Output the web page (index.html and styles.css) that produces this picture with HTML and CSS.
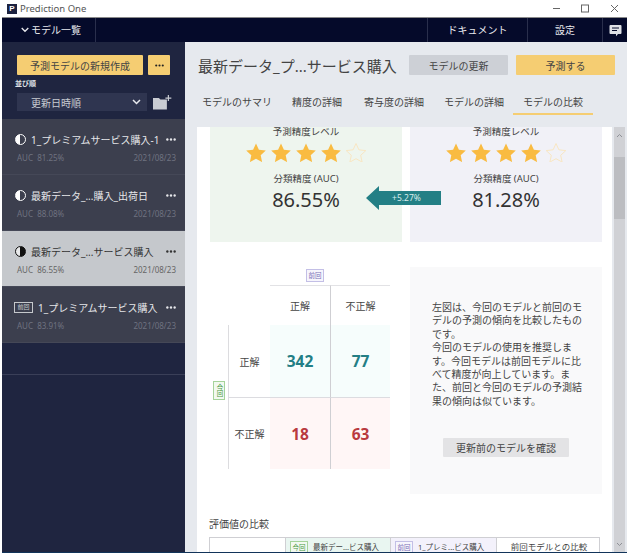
FILE: index.html
```html
<!DOCTYPE html>
<html lang="ja">
<head>
	<meta charset="utf-8">
	<title>Prediction One</title>
	<link rel="stylesheet" href="styles.css">
</head>
<body>
	<svg class="defs" width="0" height="0">
		<symbol id="star" viewBox="0 0 20 19"><path d="M10 .5l2.900 6.300 6.900.8-5.100 4.700 1.400 6.800L10 15.700l-6.100 3.400 1.400-6.800L.2 7.600l6.900-.8z"/></symbol>
		<symbol id="dots" viewBox="0 0 11 3"><circle cx="1.500" cy="1.500" r="1.300"/><circle cx="5.500" cy="1.500" r="1.300"/><circle cx="9.500" cy="1.500" r="1.300"/></symbol>
	</svg>

	<div class="window">
		<div class="titlebar">
			<span class="app-logo">P</span>
			<span class="app-name">Prediction One</span>
			<div class="win-btns">
				<svg width="9" height="9" viewBox="0 0 9 9"><path d="M1 4.500h7" stroke="#666" fill="none"/></svg>
				<svg width="9" height="9" viewBox="0 0 9 9"><rect x=".5" y="1" width="7" height="7" stroke="#666" fill="none"/></svg>
				<svg width="9" height="9" viewBox="0 0 9 9"><path d="M1 1l7 7M8 1L1 8" stroke="#666" fill="none"/></svg>
			</div>
		</div>

		<div class="nav">
			<div class="nav-models">
				<svg width="8" height="6" viewBox="0 0 8 6"><path d="M.7 1l3.300 3.300L7.300 1" stroke="#e8e9ee" stroke-width="1.300" fill="none"/></svg>
				モデル一覧
			</div>
			<div class="nav-space"></div>
			<div class="nav-item nav-doc">ドキュメント</div>
			<div class="nav-item nav-set">設定</div>
			<div class="nav-item nav-chat">
				<svg width="13" height="13" viewBox="0 0 13 13"><path d="M1.500 1h10a1 1 0 0 1 1 1v7a1 1 0 0 1-1 1H9l-2 2.200V10H1.500a1 1 0 0 1-1-1V2a1 1 0 0 1 1-1z" fill="#dfe1e6"/><path d="M3 4h7M3 6.500h5" stroke="#050a2a"/></svg>
			</div>
		</div>

		<div class="app">
			<aside class="sidebar">
				<div class="side-top">
					<div class="new-row">
						<button class="btn-new">予測モデルの新規作成</button>
						<button class="btn-more"><svg class="dots" width="9" height="3"><use href="#dots"/></svg></button>
					</div>
					<div class="sort-label">並び順</div>
					<div class="sort-row">
						<div class="sort-select">
							更新日時順
							<svg width="9" height="6" viewBox="0 0 9 6"><path d="M1 1l3.500 3.500L8 1" stroke="#e8e9ee" stroke-width="1.500" fill="none"/></svg>
						</div>
						<svg class="folder" width="20" height="15" viewBox="0 0 20 15"><path d="M1 3h6l1.500 1.500H15V14.500H1z" fill="#c9ccd2"/><path d="M16.500 0v6M13.500 3h6" stroke="#c9ccd2" stroke-width="1.200"/></svg>
					</div>
				</div>

				<div class="model-list">
					<div class="model">
						<div class="model-main">
							<span class="half"></span>
							<span class="model-name">1_プレミアムサービス購入-1</span>
							<svg class="dots" width="10" height="3"><use href="#dots"/></svg>
						</div>
						<div class="model-sub"><span>AUC&nbsp; 81.25%</span><span>2021/08/23</span></div>
					</div>
					<div class="model">
						<div class="model-main">
							<span class="half"></span>
							<span class="model-name">最新データ_...購入_出荷日</span>
							<svg class="dots" width="10" height="3"><use href="#dots"/></svg>
						</div>
						<div class="model-sub"><span>AUC&nbsp; 88.08%</span><span>2021/08/23</span></div>
					</div>
					<div class="model selected">
						<div class="model-main">
							<span class="half"></span>
							<span class="model-name">最新データ_...サービス購入</span>
							<svg class="dots" width="10" height="3"><use href="#dots"/></svg>
						</div>
						<div class="model-sub"><span>AUC&nbsp; 86.55%</span><span>2021/08/23</span></div>
					</div>
					<div class="model">
						<div class="model-main">
							<span class="prev-tag">前回</span>
							<span class="model-name">1_プレミアムサービス購入</span>
							<svg class="dots" width="10" height="3"><use href="#dots"/></svg>
						</div>
						<div class="model-sub"><span>AUC&nbsp; 83.91%</span><span>2021/08/23</span></div>
					</div>
				</div>
				<div class="side-rest"></div>
			</aside>

			<main class="main">
				<div class="main-head">
					<h1>最新データ_プ...サービス購入</h1>
					<button class="btn-update">モデルの更新</button>
					<button class="btn-predict">予測する</button>
				</div>
				<div class="tabs">
					<span class="tab">モデルのサマリ</span>
					<span class="tab">精度の詳細</span>
					<span class="tab">寄与度の詳細</span>
					<span class="tab">モデルの詳細</span>
					<span class="tab active">モデルの比較</span>
				</div>

				<div class="scroll-wrap">
					<div class="content">
						<div class="score-row">
							<div class="score now">
								<div class="score-label">予測精度レベル</div>
								<div class="stars">
									<svg><use href="#star"/></svg>
									<svg><use href="#star"/></svg>
									<svg><use href="#star"/></svg>
									<svg><use href="#star"/></svg>
									<svg class="star-off"><use href="#star"/></svg>
								</div>
								<div class="score-label auc">分類精度 (AUC)</div>
								<div class="score-num">86.55%</div>
							</div>
							<div class="score before">
								<div class="score-label">予測精度レベル</div>
								<div class="stars">
									<svg><use href="#star"/></svg>
									<svg><use href="#star"/></svg>
									<svg><use href="#star"/></svg>
									<svg><use href="#star"/></svg>
									<svg class="star-off"><use href="#star"/></svg>
								</div>
								<div class="score-label auc">分類精度 (AUC)</div>
								<div class="score-num">81.28%</div>
							</div>
							<div class="diff-arrow">
								<svg width="75" height="24" viewBox="0 0 75 24"><path d="M0 12L13 0v5h62v14H13v5z" fill="#237f85"/></svg>
								<span>+5.27%</span>
							</div>
						</div>

						<div class="compare-row">
							<div class="matrix-box">
								<div class="tag tag-prev matrix-prev">前回</div>
								<div class="tag tag-now matrix-now">今回</div>
								<div class="matrix">
									<div class="m-blank"></div>
									<div class="m-head m-top">正解</div>
									<div class="m-head m-top m-div">不正解</div>
									<div class="m-head m-left">正解</div>
									<div class="m-val good">342</div>
									<div class="m-val good m-div">77</div>
									<div class="m-head m-left m-low">不正解</div>
									<div class="m-val bad m-low">18</div>
									<div class="m-val bad m-low m-div">63</div>
								</div>
							</div>
							<div class="note">
								<p>左図は、今回のモデルと前回のモデルの予測の傾向を比較したものです。<br>今回のモデルの使用を推奨します。今回モデルは前回モデルに比べて精度が向上しています。また、前回と今回のモデルの予測結果の傾向は似ています。</p>
								<button class="btn-check">更新前のモデルを確認</button>
							</div>
						</div>

						<h2>評価値の比較</h2>
						<div class="eval-head">
							<div class="eval-cell"></div>
							<div class="eval-cell eval-now"><span class="tag tag-now">今回</span>最新デー...ビス購入</div>
							<div class="eval-cell eval-prev"><span class="tag tag-prev">前回</span>1_プレミ...ビス購入</div>
							<div class="eval-cell eval-diff">前回モデルとの比較</div>
						</div>
					</div>
					<div class="scrollbar">
						<span class="sb-arrow">
							<svg width="7" height="5" viewBox="0 0 7 5"><path d="M1 4l2.500-2.500L6 4" stroke="#8f9197" fill="none"/></svg>
						</span>
						<div class="sb-thumb"></div>
						<span class="sb-arrow sb-down">
							<svg width="7" height="5" viewBox="0 0 7 5"><path d="M1 1l2.500 2.500L6 1" stroke="#8f9197" fill="none"/></svg>
						</span>
					</div>
				</div>
			</main>
		</div>
	</div>
</body>
</html>
```

FILE: styles.css
```css
* {
	margin: 0;
	padding: 0;
	box-sizing: border-box;
}

html, body {
	height: 100%;
	background-color: #fff;
	overflow: hidden;
}

body {
	font-family: "Noto Sans", "Noto Sans CJK JP", sans-serif;
	color: #444;
}

button {
	font-family: inherit;
	border: 0;
	color: #444;
}

.defs {
	display: block;
}

.dots {
	flex: none;
	fill: currentColor;
}

.window {
	display: flex;
	flex-direction: column;
	width: 625px;
	height: 553px;
	margin-left: 2px;
	border-bottom: 1px solid #12345a;
}

/* タイトルバー */
.titlebar {
	display: flex;
	align-items: center;
	height: 18px;
	padding-left: 5px;
	border-bottom: 1px solid #8a8a8a;
	background-color: #fff;
}

.app-logo {
	width: 10px;
	height: 10px;
	background-color: #1d2340;
	color: #fff;
	font-size: 8px;
	line-height: 10px;
	text-align: center;
	font-family: "Liberation Sans", sans-serif;
	font-weight: bold;
}

.app-name {
	margin-left: 3px;
	font-size: 9.500px;
	color: #555;
}

.win-btns {
	display: flex;
	gap: 20px;
	margin-left: auto;
	padding-right: 8px;
}

/* ナビ */
.nav {
	display: flex;
	height: 24px;
	background-color: #050a2a;
	color: #e8e9ee;
	font-size: 10px;
	line-height: 24px;
}

.nav-models {
	display: flex;
	align-items: center;
	gap: 2px;
	width: 94px;
	padding-left: 19px;
	border-right: 1px solid #2a2f4c;
}

.nav-space {
	flex: 1;
}

.nav-item {
	display: flex;
	align-items: center;
	justify-content: center;
	border-left: 1px solid #2a2f4c;
}

.nav-doc { width: 100px; }
.nav-set { width: 75px; }
.nav-chat { width: 25px; }

.app {
	display: flex;
	flex: 1;
	min-height: 0;
}

/* サイドバー */
.sidebar {
	display: flex;
	flex-direction: column;
	width: 183px;
	background-color: #1f2540;
}

.side-top {
	height: 77px;
	padding: 13px 13px 0 15px;
}

.new-row {
	display: flex;
	gap: 5px;
}

.btn-new {
	width: 126px;
	height: 20px;
	background-color: #f5cd72;
	border-radius: 1px;
	font-size: 10px;
}

.btn-more {
	display: flex;
	align-items: center;
	justify-content: center;
	width: 22px;
	height: 20px;
	background-color: #f5cd72;
	border-radius: 1px;
	color: #222;
}

.sort-label {
	margin: 2px 0 0 -2px;
	height: 16px;
	font-size: 7px;
	line-height: 14px;
	color: #dfe1e6;
	font-weight: bold;
}

.sort-row {
	display: flex;
	align-items: center;
	gap: 5px;
}

.sort-select {
	display: flex;
	align-items: center;
	justify-content: space-between;
	width: 131px;
	height: 18px;
	padding: 0 6px 0 14px;
	background-color: #2f3550;
	font-size: 10px;
	color: #c9ccd2;
}

.model-list {
	display: flex;
	flex-direction: column;
}

.model {
	height: 56px;
	padding: 13px 9px 0 13px;
	background-color: #3c3f4e;
	border-bottom: 1px solid #454857;
	color: #e6e7ea;
}

.model.selected {
	background-color: #c5c8cc;
	color: #333;
}

.model-main {
	display: flex;
	align-items: center;
	height: 14px;
	font-size: 10px;
}

.half {
	flex: none;
	width: 11px;
	height: 11px;
	margin-right: 5px;
	border-radius: 50%;
	border: 1px solid #fff;
	background: linear-gradient(90deg, #fff 50%, #3c3f4e 50%);
}

.selected .half {
	border-color: #111;
	background: linear-gradient(90deg, #e8e9ea 50%, #111 50%);
}

.prev-tag {
	flex: none;
	width: 19px;
	height: 11px;
	margin: 0 5px 0 -1px;
	border: 1px solid #c5c8cc;
	font-size: 6px;
	line-height: 9px;
	text-align: center;
	color: #c5c8cc;
}

.model-name {
	flex: 1;
	white-space: nowrap;
}

.model-sub {
	display: flex;
	justify-content: space-between;
	margin-top: 6px;
	padding-left: 2px;
	font-size: 8px;
	color: #6f7280;
}

.selected .model-sub {
	color: #666;
}

.side-rest {
	height: 32px;
	border-bottom: 1px solid #3a3f58;
}

/* メイン */
.main {
	display: flex;
	flex: 1;
	flex-direction: column;
	min-width: 0;
	background-color: #e6e9ee;
}

.main-head {
	display: flex;
	align-items: center;
	height: 33px;
	padding: 13px 0 0 13px;
}

.main-head h1 {
	width: 211px;
	font-size: 15px;
	font-weight: normal;
	white-space: nowrap;
	color: #444;
}

.btn-update, .btn-predict {
	width: 99px;
	height: 20px;
	font-size: 10px;
	border-radius: 1px;
}

.btn-update {
	background-color: #cdd0d6;
}

.btn-predict {
	margin-left: 8px;
	background-color: #f5cd72;
}

.tabs {
	display: flex;
	align-items: flex-start;
	height: 52px;
	padding: 16px 0 0 7px;
	font-size: 10px;
}

.tab {
	height: 24px;
	padding: 3px 10px 0;
	white-space: nowrap;
}

.tab:nth-child(3) {
	margin-left: 2px;
}

.tab.active {
	margin-left: -1px;
	border-bottom: 2px solid #f5cd72;
}

.scroll-wrap {
	display: flex;
	flex: 1;
	min-height: 0;
	padding-left: 12px;
	gap: 2px;
}

.content {
	width: 415px;
	padding: 0 10px 0 12px;
	background-color: #fff;
	overflow: hidden;
}

.scrollbar {
	display: flex;
	flex-direction: column;
	width: 11px;
	background-color: #d0d1d5;
}

.sb-arrow {
	display: flex;
	align-items: center;
	justify-content: center;
	height: 16px;
}

.sb-thumb {
	height: 62px;
	margin-top: 14px;
	background-color: #bcbdc1;
}

.sb-down {
	margin-top: auto;
}

/* スコア */
.score-row {
	display: flex;
	gap: 8px;
	position: relative;
	padding-left: 1px;
}

.score {
	width: 192px;
	height: 115px;
	text-align: center;
	overflow: hidden;
}

.score.now { background-color: #eef5ee; }
.score.before { background-color: #f1f1f7; }

.score-label {
	margin-top: -2px;
	font-size: 9.500px;
	line-height: 14px;
}

.stars {
	display: flex;
	justify-content: center;
	gap: 5px;
	height: 19px;
	margin-top: 4px;
	fill: #f9bb41;
}

.stars svg {
	width: 20px;
	height: 19px;
}

.stars .star-off {
	fill: none;
	stroke: #f8e6c2;
	stroke-width: 1;
}

.score-label.auc {
	margin-top: 10px;
}

.score-num {
	font-size: 20px;
	line-height: 28px;
	color: #333;
}

.diff-arrow {
	position: absolute;
	left: 157px;
	top: 59px;
	width: 75px;
	height: 24px;
	color: #d8ecec;
	font-size: 8.500px;
	line-height: 24px;
	text-align: center;
}

.diff-arrow svg {
	position: absolute;
	left: 0;
	top: 0;
}

.diff-arrow span {
	position: relative;
	padding-left: 6px;
}

/* 混同行列 */
.compare-row {
	display: flex;
	margin-top: 25px;
	padding-left: 1px;
	gap: 8px;
}

.matrix-box {
	position: relative;
	width: 192px;
	height: 227px;
}

.tag {
	display: inline-block;
	border: 1px solid;
	font-size: 6.500px;
	text-align: center;
	line-height: 1;
	white-space: nowrap;
}

.tag-prev {
	border-color: #c3bfe6;
	color: #7a6fb8;
	background-color: #f6f5fc;
}

.tag-now {
	border-color: #a5d39a;
	color: #4a9a45;
	background-color: #f2f9f0;
}

.matrix-prev {
	position: absolute;
	left: 96px;
	top: 2px;
	width: 18px;
	height: 13px;
	line-height: 11px;
}

.matrix-now {
	position: absolute;
	left: 3px;
	top: 114px;
	width: 12px;
	height: 19px;
	writing-mode: vertical-rl;
	line-height: 10px;
}

.matrix {
	display: grid;
	grid-template-columns: 42px 60px 60px;
	grid-template-rows: 40px 72px 72px;
	margin: 18px 0 0 18px;
	font-size: 10px;
}

.m-blank {
	background-color: #fff;
}

.m-head {
	display: flex;
	align-items: center;
	justify-content: center;
}

.m-top {
	border-top: 1px solid #e2e2e5;
}

.m-left {
	border-left: 1px solid #dcdcdf;
}

.m-div {
	border-left: 1px solid #cfcfd3;
}

.m-low {
	border-top: 1px solid #dcdce0;
}

.m-val {
	display: flex;
	align-items: center;
	justify-content: center;
	font-size: 15.500px;
	font-weight: bold;
}

.m-val.good {
	background-color: #f6fdfc;
	color: #237f85;
}

.m-val.bad {
	background-color: #fff6f6;
	color: #b93a3f;
}

.note {
	display: flex;
	flex-direction: column;
	align-items: center;
	width: 192px;
	height: 227px;
	padding-top: 34px;
	background-color: #f9f9fa;
}

.note p {
	align-self: flex-start;
	width: 152px;
	margin-left: 22px;
	font-size: 10px;
	line-height: 13.400px;
	color: #444;
}

.btn-check {
	width: 126px;
	height: 19px;
	margin-top: 30px;
	background-color: #e3e3e5;
	font-size: 10px;
	border-radius: 1px;
}

/* 評価値 */
.content h2 {
	margin-top: 22px;
	font-size: 10px;
	line-height: 16px;
	font-weight: normal;
}

.eval-head {
	display: grid;
	grid-template-columns: 75px 105px 106px 105px;
	margin-top: 5px;
	width: 391px;
	height: 30px;
	border: 1px solid #cfcfd3;
	font-size: 7.500px;
}

.eval-cell {
	display: flex;
	align-items: flex-start;
	padding-top: 3px;
	border-left: 1px solid #cfcfd3;
	white-space: nowrap;
}

.eval-cell:first-child {
	border-left: 0;
}

.eval-cell .tag {
	flex: none;
	width: 18px;
	height: 13px;
	margin: 0 5px 0 4px;
	line-height: 11px;
}

.eval-now { background-color: #e9f6f1; }
.eval-prev { background-color: #f3f1fb; }

.eval-diff {
	justify-content: center;
	padding-top: 2px;
	font-size: 8.500px;
}
```
